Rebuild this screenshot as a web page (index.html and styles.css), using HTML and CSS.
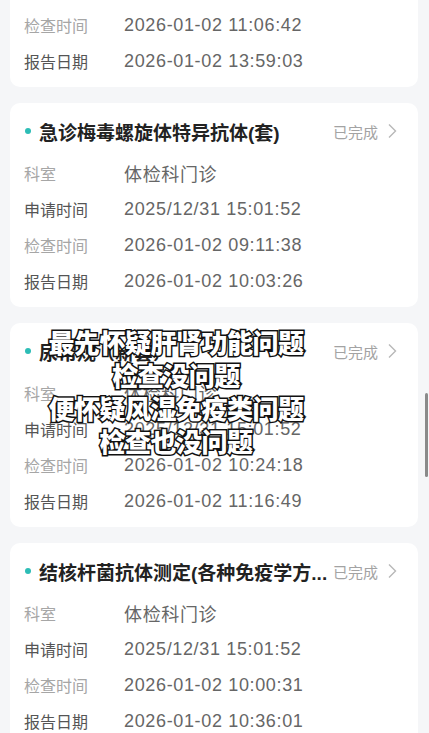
FILE: index.html
```html
<!DOCTYPE html>
<html lang="zh-CN">
<head>
    <meta charset="UTF-8">
    <meta name="viewport" content="width=device-width, initial-scale=1.0">
    <title>检查报告</title>
    <link rel="stylesheet" href="styles.css">
</head>
<body>

    <div class="page">
        <div class="list">
            <div class="card">
                <div class="card-head">
                    <span class="dot"></span>
                    <span class="title">肝功能(套)</span>
                    <span class="status">已完成</span>
                    <svg class="chev" width="10" height="16" viewBox="0 0 10 16"><polyline points="2,1.5 8.5,8 2,14.5" fill="none" stroke="#b8b8b8" stroke-width="1.4"/></svg>
                </div>
                <div class="row"><span class="label">科室</span><span class="value">体检科门诊</span></div>
                <div class="row"><span class="label dark">申请时间</span><span class="value">2025/12/31 15:01:52</span></div>
                <div class="row"><span class="label">检查时间</span><span class="value">2026-01-02 11:06:42</span></div>
                <div class="row"><span class="label dark">报告日期</span><span class="value">2026-01-02 13:59:03</span></div>
            </div>

            <div class="card">
                <div class="card-head">
                    <span class="dot"></span>
                    <span class="title">急诊梅毒螺旋体特异抗体(套)</span>
                    <span class="status">已完成</span>
                    <svg class="chev" width="10" height="16" viewBox="0 0 10 16"><polyline points="2,1.5 8.5,8 2,14.5" fill="none" stroke="#b8b8b8" stroke-width="1.4"/></svg>
                </div>
                <div class="row"><span class="label">科室</span><span class="value">体检科门诊</span></div>
                <div class="row"><span class="label dark">申请时间</span><span class="value">2025/12/31 15:01:52</span></div>
                <div class="row"><span class="label">检查时间</span><span class="value">2026-01-02 09:11:38</span></div>
                <div class="row"><span class="label dark">报告日期</span><span class="value">2026-01-02 10:03:26</span></div>
            </div>

            <div class="card">
                <div class="card-head">
                    <span class="dot"></span>
                    <span class="title">尿常规（新套）</span>
                    <span class="status">已完成</span>
                    <svg class="chev" width="10" height="16" viewBox="0 0 10 16"><polyline points="2,1.5 8.5,8 2,14.5" fill="none" stroke="#b8b8b8" stroke-width="1.4"/></svg>
                </div>
                <div class="row"><span class="label">科室</span><span class="value">体检科门诊</span></div>
                <div class="row"><span class="label dark">申请时间</span><span class="value">2025/12/31 15:01:52</span></div>
                <div class="row"><span class="label">检查时间</span><span class="value">2026-01-02 10:24:18</span></div>
                <div class="row"><span class="label dark">报告日期</span><span class="value">2026-01-02 11:16:49</span></div>
            </div>

            <div class="card">
                <div class="card-head">
                    <span class="dot"></span>
                    <span class="title">结核杆菌抗体测定(各种免疫学方...</span>
                    <span class="status">已完成</span>
                    <svg class="chev" width="10" height="16" viewBox="0 0 10 16"><polyline points="2,1.5 8.5,8 2,14.5" fill="none" stroke="#b8b8b8" stroke-width="1.4"/></svg>
                </div>
                <div class="row"><span class="label">科室</span><span class="value">体检科门诊</span></div>
                <div class="row"><span class="label dark">申请时间</span><span class="value">2025/12/31 15:01:52</span></div>
                <div class="row"><span class="label">检查时间</span><span class="value">2026-01-02 10:00:31</span></div>
                <div class="row"><span class="label dark">报告日期</span><span class="value">2026-01-02 10:36:01</span></div>
            </div>
        </div>

        <!-- video subtitle over the list -->
        <div class="subtitle">
            <div>最先怀疑肝肾功能问题</div>
            <div>检查没问题</div>
            <div>便怀疑风湿免疫类问题</div>
            <div>检查也没问题</div>
        </div>

        <div class="scrollbar"></div>
    </div>

</body>
</html>
```

FILE: styles.css
```css
body {
    margin: 0;
    font-family: "Liberation Sans", "Noto Sans CJK SC", sans-serif;
    background-color: #f5f6f8;
    overflow: hidden;
}

.page {
    position: relative;
    height: 733px;
    overflow: hidden;
}

.list {
    display: flex;
    flex-direction: column;
    gap: 16px;
    padding: 0 11px 0 10px;
    margin-top: -117px; /* list is scrolled */
}

.card {
    background-color: #fff;
    border-radius: 10px;
    padding: 16px 21px 8px 14px;
    height: 180px;
}

.card-head {
    display: flex;
    align-items: center;
    height: 24px;
    margin-bottom: 12px;
}

.dot {
    flex: none;
    width: 6px;
    height: 6px;
    border-radius: 50%;
    background-color: #2dbdb6;
    margin: 0 8px 0 0;
    position: relative;
    left: 1px;
}

.title {
    flex: 1;
    min-width: 0;
    font-size: 19px;
    font-weight: bold;
    color: #222;
    white-space: nowrap;
    overflow: hidden;
    padding-left: 1px;
}

.status {
    flex: none;
    font-size: 15px;
    color: #a3a3a3;
    margin-left: 3px;
}

.chev {
    flex: none;
    margin-left: 9px;
}

.row {
    display: flex;
    align-items: center;
    height: 36px;
}

.label {
    width: 100px;
    flex: none;
    font-size: 16px;
    color: #a6a6a6;
}
.label.dark {
    color: #555;
}

.value {
    font-size: 18px;
    letter-spacing: 0.65px;
    color: #666;
}

.subtitle {
    position: absolute;
    left: 26px;
    top: 325px;
    width: 300px;
    text-align: center;
    font-family: "Noto Sans CJK SC", sans-serif;
    font-size: 26px;
    font-weight: 900;
    line-height: 33px;
    color: #fff;
    -webkit-text-stroke: 3px #111;
    paint-order: stroke fill;
    letter-spacing: -0.5px;
}

.scrollbar {
    position: absolute;
    right: 1px;
    top: 393px;
    width: 3px;
    height: 84px;
    border-radius: 2px;
    background-color: #8a8a8a;
}
```
